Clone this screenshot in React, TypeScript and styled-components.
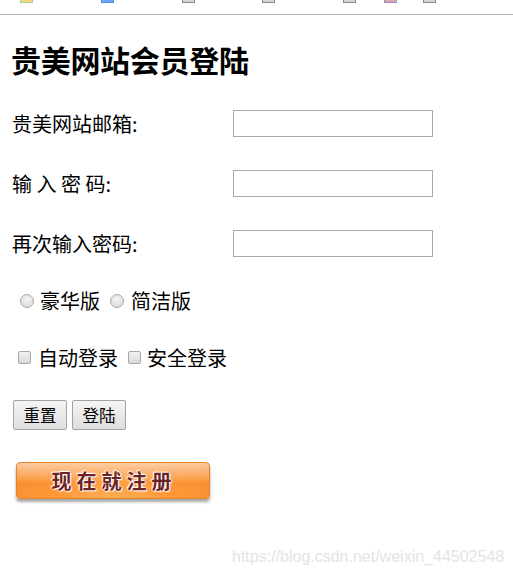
import React from 'react';
import styled, { createGlobalStyle } from 'styled-components';

const GlobalStyle = createGlobalStyle`
  html, body {
    margin: 0;
    padding: 0;
    background: #ffffff;
  }
  body {
    font-family: "Noto Sans CJK SC", "Liberation Sans", sans-serif;
    color: #000000;
  }
`;

const Screen = styled.div`
  position: relative;
  width: 513px;
  height: 577px;
  overflow: hidden;
  background: #ffffff;
`;

const BookmarkBar = styled.div`
  height: 14px;
  border-bottom: 1px solid #b9b9b9;
  display: flex;
  align-items: flex-start;
`;

const BookmarkStub = styled.span<{ $left: number; $color: string; $fill?: string }>`
  display: block;
  margin-left: ${p => p.$left}px;
  width: 13px;
  height: 3px;
  box-sizing: border-box;
  border: 1px solid ${p => p.$color};
  border-top: none;
  background: ${p => p.$fill || '#ffffff'};
`;

const Page = styled.div`
  padding: 0 10px;
`;

const Title = styled.h2`
  margin: 29px 0 0 1px;
  font-size: 30px;
  line-height: 30px;
  font-weight: 700;
  letter-spacing: -0.3px;
`;

const FieldList = styled.div`
  margin-top: 36px;
  display: flex;
  flex-direction: column;
  gap: 33px;
`;

const FieldRow = styled.label`
  display: grid;
  grid-template-columns: 223px 200px;
  align-items: center;
  height: 27px;
`;

const FieldLabel = styled.span`
  padding-left: 2px;
  font-size: 20px;
  line-height: 27px;
  white-space: pre;
`;

const TextBox = styled.input`
  box-sizing: border-box;
  width: 200px;
  height: 27px;
  margin: 0;
  border: 1px solid #a9a9a9;
  background: #ffffff;
  outline: none;
`;

const ChoiceRow = styled.div<{ $top: number; $indent: number }>`
  margin-top: ${p => p.$top}px;
  padding-left: ${p => p.$indent}px;
  display: flex;
  align-items: center;
  height: 27px;
  font-size: 20px;
`;

const Choice = styled.label<{ $gap: number; $after: number }>`
  display: flex;
  align-items: center;
  gap: ${p => p.$gap}px;
  margin-right: ${p => p.$after}px;
`;

const RadioDot = styled.span`
  display: inline-block;
  width: 14px;
  height: 14px;
  box-sizing: border-box;
  border-radius: 50%;
  border: 1px solid #a7a7a7;
  background: radial-gradient(circle at 50% 35%, #f4f4f4 0%, #dcdcdc 80%);
`;

const CheckBox = styled.span`
  display: inline-block;
  width: 13px;
  height: 13px;
  box-sizing: border-box;
  border-radius: 2px;
  border: 1px solid #a7a7a7;
  background: linear-gradient(#f2f2f2, #d9d9d9);
`;

const ButtonRow = styled.div`
  margin-top: 29px;
  margin-left: 3px;
  display: flex;
  gap: 5px;
`;

const PlainButton = styled.button`
  box-sizing: border-box;
  height: 30px;
  width: 54px;
  padding: 0;
  border: 1px solid #a3a3a3;
  border-radius: 2px;
  background: linear-gradient(#f5f5f5, #dedede);
  font-family: "Noto Sans CJK SC", sans-serif;
  font-size: 16.5px;
  color: #000000;
`;

const RegisterButton = styled.button`
  margin-top: 32px;
  margin-left: 6px;
  box-sizing: border-box;
  width: 194px;
  height: 37px;
  padding: 0 0 0 2px;
  border: 1px solid #e7832a;
  border-radius: 4px;
  background:
    linear-gradient(180deg, rgba(255, 255, 255, 0.55) 0%, rgba(255, 255, 255, 0.15) 45%, rgba(255, 255, 255, 0) 55%),
    radial-gradient(ellipse at 50% 120%, #ffb45c 0%, #ff9838 45%, #f68a2c 100%);
  box-shadow: 0 3px 3px rgba(0, 0, 0, 0.35);
  font-family: "Noto Sans CJK SC", sans-serif;
  font-size: 20px;
  font-weight: 700;
  letter-spacing: 5px;
  color: #6e2424;
  text-shadow:
    0 0 2px #ffffff, 0 0 2px #ffffff, 1px 1px 1px #ffffff, -1px -1px 1px #ffffff;
`;

const Watermark = styled.div`
  position: absolute;
  left: 232px;
  top: 548px;
  font-family: "Liberation Sans", Arial, sans-serif;
  font-size: 16px;
  color: #e4e4e4;
  white-space: nowrap;
`;

const stubs = [
  { left: 20, color: '#9fd39a', fill: '#f4d77a' },
  { left: 68, color: '#4a8ef0', fill: '#6ea6f5' },
  { left: 68, color: '#8a8a8a', fill: '#d6d6d6' },
  { left: 67, color: '#8a8a8a', fill: '#d6d6d6' },
  { left: 68, color: '#8a8a8a', fill: '#d6d6d6' },
  { left: 28, color: '#9a8fc9', fill: '#d9a9a9' },
  { left: 26, color: '#8a8a8a', fill: '#d6d6d6' },
];

const fields = ['贵美网站邮箱:', '输 入 密 码:', '再次输入密码:'];

export default function App() {
  return (
    <Screen>
      <GlobalStyle />
      <BookmarkBar>
        {stubs.map((s, i) => (
          <BookmarkStub key={i} $left={s.left} $color={s.color} $fill={s.fill} />
        ))}
      </BookmarkBar>
      <Page>
        <Title>贵美网站会员登陆</Title>
        <FieldList>
          {fields.map(f => (
            <FieldRow key={f}>
              <FieldLabel>{f}</FieldLabel>
              <TextBox type="text" />
            </FieldRow>
          ))}
        </FieldList>
        <ChoiceRow $top={30} $indent={10}>
          <Choice $gap={6} $after={10}>
            <RadioDot />
            豪华版
          </Choice>
          <Choice $gap={7} $after={0}>
            <RadioDot />
            简洁版
          </Choice>
        </ChoiceRow>
        <ChoiceRow $top={30} $indent={8}>
          <Choice $gap={7} $after={10}>
            <CheckBox />
            自动登录
          </Choice>
          <Choice $gap={6} $after={0}>
            <CheckBox />
            安全登录
          </Choice>
        </ChoiceRow>
        <ButtonRow>
          <PlainButton>重置</PlainButton>
          <PlainButton>登陆</PlainButton>
        </ButtonRow>
        <RegisterButton>现在就注册</RegisterButton>
      </Page>
      <Watermark>https://blog.csdn.net/weixin_44502548</Watermark>
    </Screen>
  );
}
